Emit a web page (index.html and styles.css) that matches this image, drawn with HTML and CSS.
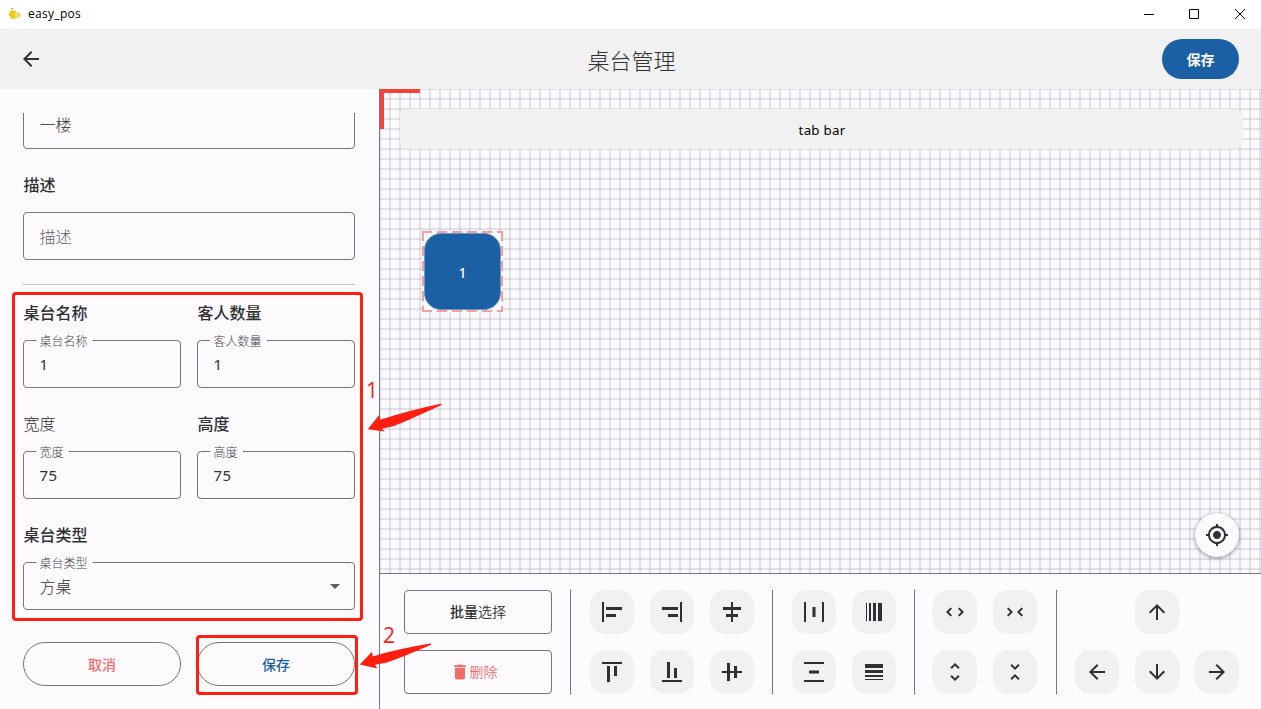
FILE: index.html
```html
<!DOCTYPE html>
<html lang="zh-CN">
<head>
<meta charset="utf-8">
<title>easy_pos</title>
<link rel="stylesheet" href="styles.css">
</head>
<body>
<svg class="defs" width="0" height="0">
  <symbol id="back" viewBox="0 0 24 24"><path d="M20 11H7.83l5.59-5.59L12 4l-8 8 8 8 1.41-1.41L7.83 13H20v-2z"/></symbol>
  <symbol id="more" viewBox="0 0 24 24"><path d="M12 5.83L15.17 9l1.41-1.41L12 3 7.41 7.59 8.83 9 12 5.83zm0 12.34L8.83 15l-1.41 1.41L12 21l4.59-4.59L15.17 15 12 18.17z"/></symbol>
  <symbol id="less" viewBox="0 0 24 24"><path d="M7.41 18.59L8.83 20 12 16.83 15.17 20l1.41-1.41L12 14l-4.59 4.59zm9.18-13.18L15.17 4 12 7.17 8.83 4 7.41 5.41 12 10l4.59-4.59z"/></symbol>
  <symbol id="weight" viewBox="0 0 24 24"><path d="M3 17h18v-2H3v2zm0 3h18v-1H3v1zm0-7h18v-3H3v3zm0-9v4h18V4H3z"/></symbol>
</svg>
<div class="window">
  <header class="titlebar">
    <svg class="logo" width="14" height="14" viewBox="0 0 14 14">
      <path d="M2 3.500h5.500l.5 1.700-1.200 2.300 1.300 3-1.600 1.200H3L2.200 9.500 1 8.500V5.500l1-.3z" fill="#f6c915"/>
      <circle cx="9.600" cy="8.300" r="2.500" fill="#fdf0b8" stroke="#f3c62c" stroke-width="1.100" stroke-dasharray="1.600 .8"/>
      <path d="M8.300 7l2.600 2.500M10.800 7.300L8.500 9.300" stroke="#eebc22" stroke-width=".8"/>
      <path d="M3.300 1h1.500v1.300H3.300z" fill="#5cb531"/>
    </svg>
    <span class="app-name">easy_pos</span>
    <svg class="win-controls" width="104" height="12" viewBox="0 0 104 12" fill="none" stroke="#000">
      <path d="M1 6.500h10"/><path d="M46.500 1.500h9v9h-9z"/><path d="M92 1l10 10M102 1L92 11"/>
    </svg>
  </header>
  <div class="appbar">
    <svg class="icon"><use href="#back"/></svg>
    <h1 class="page-title">桌台管理</h1>
    <button class="save-top">保存</button>
  </div>
  <main class="main">
    <aside class="panel">
      <div class="scroll">
        <div class="field first"><span class="value">一楼</span></div>
        <div class="label">描述</div>
        <div class="field"><span class="hint">描述</span></div>
        <div class="rule"></div>
        <div class="row after-rule">
          <div class="col"><div class="label">桌台名称</div><div class="field"><span class="legend">桌台名称</span><span class="value number">1</span></div></div>
          <div class="col"><div class="label">客人数量</div><div class="field"><span class="legend">客人数量</span><span class="value number">1</span></div></div>
        </div>
        <div class="row">
          <div class="col"><div class="label light">宽度</div><div class="field"><span class="legend">宽度</span><span class="value number">75</span></div></div>
          <div class="col"><div class="label">高度</div><div class="field"><span class="legend">高度</span><span class="value number">75</span></div></div>
        </div>
        <div class="label">桌台类型</div>
        <div class="field"><span class="legend">桌台类型</span><span class="value choice">方桌</span>
          <svg class="icon caret" viewBox="0 0 24 24"><path d="M7 10l5 5 5-5z"/></svg>
        </div>
      </div>
      <div class="actions">
        <button class="pill cancel">取消</button>
        <button class="pill confirm">保存</button>
      </div>
    </aside>
    <section class="work">
      <div class="canvas">
        <div class="corner"></div>
        <div class="tabbar">tab bar</div>
        <div class="table-node">
          <svg class="dashes" width="81" height="81" viewBox="0 0 81 81"><path d="M0 1h81M0 80h81M1 0v81M80 0v81"/></svg>
          <div class="table">1</div>
        </div>
        <button class="locate"><svg class="icon" viewBox="0 0 24 24"><path d="M12 8c-2.210 0-4 1.790-4 4s1.790 4 4 4 4-1.790 4-4-1.790-4-4-4zm8.940 3c-.46-4.170-3.770-7.480-7.940-7.940V1h-2v2.060C6.830 3.520 3.520 6.830 3.060 11H1v2h2.060c.46 4.170 3.770 7.480 7.940 7.940V23h2v-2.060c4.170-.46 7.480-3.770 7.940-7.940H23v-2h-2.060zM12 19c-3.870 0-7-3.130-7-7s3.130-7 7-7 7 3.130 7 7-3.130 7-7 7z"/></svg></button>
      </div>
      <div class="tools">
        <div class="batch">
          <button class="outlined"><span><b>批量</b>选择</span></button>
          <button class="outlined delete"><svg width="20" height="20" viewBox="0 0 24 24"><path d="M6 19c0 1.100.9 2 2 2h8c1.100 0 2-.9 2-2V7H6v12zM19 4h-3.500l-1-1h-5l-1 1H5v2h14V4z"/></svg><span>删除</span></button>
        </div>
        <div class="sep"></div>
        <div class="grid three">
          <button class="tool"><svg class="icon" viewBox="0 0 24 24"><path d="M4 22H2V2h2v20zM22 7H6v3h16V7zm-6 7H6v3h10v-3z"/></svg></button>
          <button class="tool"><svg class="icon" viewBox="0 0 24 24"><path d="M20 2h2v20h-2V2zM2 10h16V7H2v3zm6 7h10v-3H8v3z"/></svg></button>
          <button class="tool"><svg class="icon" viewBox="0 0 24 24"><path d="M11 2h2v5h8v3h-8v4h5v3h-5v5h-2v-5H6v-3h5v-4H3V7h8V2z"/></svg></button>
          <button class="tool"><svg class="icon" viewBox="0 0 24 24"><path d="M22 2v2H2V2h20zM7 22h3V6H7v16zm7-6h3V6h-3v10z"/></svg></button>
          <button class="tool"><svg class="icon" viewBox="0 0 24 24"><path d="M22 22H2v-2h20v2zM10 2H7v16h3V2zm7 6h-3v10h3V8z"/></svg></button>
          <button class="tool"><svg class="icon" viewBox="0 0 24 24"><path d="M22 11h-5V6h-3v5h-4V3H7v8H1.840v2H7v8h3v-8h4v5h3v-5h5v-2z"/></svg></button>
        </div>
        <div class="sep"></div>
        <div class="grid two">
          <button class="tool"><svg class="icon" viewBox="0 0 24 24"><path d="M4 22H2V2h2v20zM22 2h-2v20h2V2zM13.500 7h-3v10h3V7z"/></svg></button>
          <button class="tool"><svg class="icon right"><use href="#weight"/></svg></button>
          <button class="tool"><svg class="icon" viewBox="0 0 24 24"><path d="M22 2v2H2V2h20zM7 10.500v3h10v-3H7zM2 20v2h20v-2H2z"/></svg></button>
          <button class="tool"><svg class="icon"><use href="#weight"/></svg></button>
        </div>
        <div class="sep"></div>
        <div class="grid two">
          <button class="tool"><svg class="icon right"><use href="#more"/></svg></button>
          <button class="tool"><svg class="icon right"><use href="#less"/></svg></button>
          <button class="tool"><svg class="icon"><use href="#more"/></svg></button>
          <button class="tool"><svg class="icon"><use href="#less"/></svg></button>
        </div>
        <div class="sep"></div>
        <div class="grid three">
          <button class="tool up"><svg class="icon right"><use href="#back"/></svg></button>
          <button class="tool start"><svg class="icon"><use href="#back"/></svg></button>
          <button class="tool"><svg class="icon left"><use href="#back"/></svg></button>
          <button class="tool"><svg class="icon flip"><use href="#back"/></svg></button>
        </div>
      </div>
    </section>
  </main>
  <div class="mark mark-form"></div>
  <div class="mark mark-save"></div>
  <svg class="arrows" width="1261" height="709" viewBox="0 0 1261 709">
    <path d="M367.700 429.200L379 415.300l1.400 4.400Q408 410.500 440.700 403.700q1.800.2.800 1.200Q412 418.500 394 426l-12 2.700 2.700 2.900z"/>
    <path d="M359.800 664.400L372 651.700l.8 4.700Q400 648.500 430.300 643.600q1.600.2.800 1.100Q405 656 387 662.500l-11.800 2.300 2 3.600z"/>
  </svg>
  <span class="step step-one">1</span>
  <span class="step step-two">2</span>
</div>
</body>
</html>
```
FILE: styles.css
```css
* { box-sizing: border-box; }
body {
  margin: 0;
  color: #2f3033;
  font-family: "Noto Sans", "Noto Sans CJK SC", sans-serif;
  font-size: 14px;
}
button { font: inherit; padding: 0; border: 0; background: none; color: inherit; display: flex; align-items: center; justify-content: center; }
.defs { position: absolute; }
.window { position: relative; width: 1261px; height: 709px; overflow: hidden; display: flex; flex-direction: column; background: #fefbff; }
.icon { display: block; width: 24px; height: 24px; fill: #2f3033; }
.right { transform: rotate(90deg); }
.left { transform: rotate(-90deg); }
.flip { transform: rotate(180deg); }

.titlebar { height: 29px; flex: none; display: flex; align-items: center; padding: 0 14px 2px 8px; background: #fff; }
.app-name { margin-left: 6px; font: 12px/16px "Open Sans", sans-serif; color: #000; letter-spacing: .3px; }
.win-controls { margin-left: auto; }

.appbar { height: 60px; flex: none; display: grid; grid-template-columns: 77px 1fr 77px; align-items: center; padding: 0 22px 0 19px; background: #f1f1f1; }
.page-title { margin: 1px 0 0; padding-left: 5px; text-align: center; font-size: 22px; line-height: 28px; font-weight: 300; }
.save-top { height: 40px; border-radius: 20px; background: #1b60a5; color: #fff; font-weight: 700; }

.main { flex: 1; min-height: 0; display: flex; }
.panel { width: 380px; flex: none; border-right: 1px solid #74777f; padding: 24px 24px 0 23px; }
.scroll { height: 497px; overflow: hidden; display: flow-root; }
.label { height: 24px; margin: 24px 0 15px; padding-left: .5px; font-size: 16px; line-height: 24px; font-weight: 500; }
.label.light { font-weight: 300; }
.field { position: relative; height: 48px; display: flex; align-items: center; padding: 0 7px 0 15.500px; border: 1px solid #74777f; border-radius: 4px; font-size: 16px; font-weight: 300; }
.field.first { margin-top: -12px; padding-bottom: 2px; }
.hint { color: #5c5e63; }
.number { font-size: 15px; font-weight: 400; letter-spacing: .5px; }
.choice { margin-top: -1px; }
.legend { position: absolute; left: 11.500px; top: -7px; padding: 0 5px 0 4px; background: #fefbff; color: #46484d; font-size: 12px; line-height: 16px; }
.caret { margin-left: auto; fill: #5c5e63; }
.rule { height: 1px; margin-top: 24px; background: #c9c6d0; }
.row { display: grid; grid-template-columns: 1fr 1fr; gap: 16px; }
.after-rule .label { margin-top: 16px; }
.actions { display: grid; grid-template-columns: 1fr 1fr; gap: 16px; margin-top: 32px; }
.pill { height: 44px; border: 1px solid #74777f; border-radius: 22px; font-weight: 500; }
.cancel { color: #f56c6c; }
.confirm { color: #1b60a5; }

.work { flex: 1; min-width: 0; display: flex; flex-direction: column; }
.canvas {
  position: relative; height: 484px; flex: none; padding: 20px 18px 0 20px;
  background-color: #fafaff;
  background-image: linear-gradient(90deg, rgba(160, 150, 165, .25) 2px, transparent 2px), linear-gradient(rgba(160, 150, 165, .25) 2px, transparent 2px);
  background-size: 10px 10px; background-position: -1px -1px;
}
.corner { position: absolute; left: 0; top: 0; width: 40px; height: 40px; border: solid #f44336; border-width: 4px 0 0 4px; }
.tabbar { height: 40px; border-radius: 8px; background: #f1f1f1; color: #000; display: flex; align-items: center; justify-content: center; padding: 1px 0 0 1px; font-size: 13.300px; letter-spacing: .25px; }
.table-node { position: absolute; left: 42px; top: 142px; width: 81px; height: 81px; padding: 2px; background: #fafaff; }
.dashes { position: absolute; left: 0; top: 0; fill: none; stroke: #f44336; stroke-opacity: .5; stroke-width: 2; stroke-dasharray: 10 5; }
.table { width: 77px; height: 77px; border-radius: 17px; background: #1b60a5; border: 1px solid #6c98c5; color: #fff; display: flex; align-items: center; justify-content: center; padding-top: 2px; font-size: 14px; font-weight: 500; }
.locate { position: absolute; right: 22px; bottom: 16px; width: 44px; height: 44px; border-radius: 50%; background: #fefbff; box-shadow: 0 1px 4px rgba(0, 0, 0, .45); }

.tools { flex: 1; border-top: 1px solid #74777f; display: flex; justify-content: space-between; align-items: flex-start; padding: 16px 22px 0 24px; }
.batch { width: 148px; display: grid; gap: 16px; }
.outlined { height: 44px; border: 1px solid #74777f; border-radius: 4px; font-weight: 350; }
.outlined span { margin-top: -2px; }
.outlined b { font-weight: 500; }
.delete { color: #f56c6c; fill: #f56c6c; padding-right: 9px; }
.sep { width: 1px; height: 104px; background: #74777f; }
.grid { display: grid; gap: 16px; }
.three { grid-template-columns: repeat(3, 44px); }
.two { grid-template-columns: repeat(2, 44px); }
.tool { width: 44px; height: 44px; border-radius: 15px; background: #f1f1f1; }
.up { grid-column: 2; }
.start { grid-column: 1; }

.mark { position: absolute; border: 3px solid #ff1e10; border-radius: 4px; }
.mark-form { left: 12px; top: 292px; width: 351px; height: 329px; }
.mark-save { left: 196px; top: 635px; width: 162px; height: 60px; }
.arrows { position: absolute; left: 0; top: 0; fill: #ff1e10; pointer-events: none; }
.step { position: absolute; color: #ff1e10; font: 21px/24px "Open Sans", sans-serif; }
.step-one { left: 366px; top: 378px; }
.step-two { left: 383px; top: 623px; }
```
